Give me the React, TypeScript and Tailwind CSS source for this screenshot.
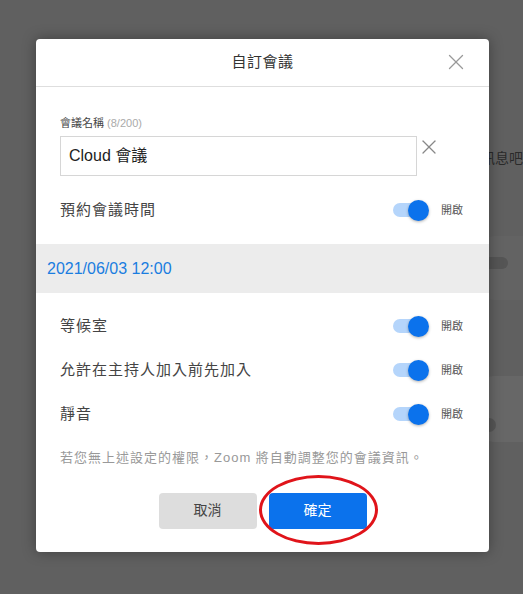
import { X } from "lucide-react";

const font = { fontFamily: '"Liberation Sans", "Noto Sans CJK TC", sans-serif' };

const Toggle = () => (
  <div className="flex items-center gap-3">
    <div className="relative w-[36px] h-[21px] flex items-center">
      <div className="w-[32px] h-[14px] rounded-full bg-[#b5d5fb]" />
      <div className="absolute right-0 top-0 w-[21px] h-[21px] rounded-full bg-[#0b72ec] shadow-[0_1px_3px_rgba(0,0,0,0.3)]" />
    </div>
    <span className="text-[11px] text-[#555]">開啟</span>
  </div>
);

const SettingRow = ({ label }: { label: string }) => (
  <div className="h-[44px] flex items-center justify-between pl-6 pr-[26px]">
    <span className="text-[15px] text-[#444] tracking-[1px]">{label}</span>
    <Toggle />
  </div>
);

export default function App() {
  return (
    <div style={font} className="relative w-[523px] h-[594px] bg-[#606060] overflow-hidden">
      {/* page behind the overlay */}
      <div className="absolute left-[481px] top-[148px] text-[14px] text-[#2a2a2a] whitespace-nowrap">訊息吧</div>
      <div className="absolute left-[480px] top-[236px] w-[80px] h-[64px] rounded-[14px] bg-[#636363]" />
      <div className="absolute left-[470px] top-[257px] w-[38px] h-[12px] rounded-full bg-[#555]" />
      <div className="absolute left-[480px] top-[376px] w-[80px] h-[66px] rounded-[14px] bg-[#676767]" />
      <div className="absolute left-[470px] top-[418px] w-[26px] h-[14px] rounded-full bg-[#575757]" />

      <div className="absolute left-[36px] top-[39px] w-[453px] h-[513px] bg-white rounded-[4px] shadow-[0_0_14px_rgba(0,0,0,0.35)] flex flex-col">
        <div className="h-[48px] flex items-center justify-center relative border-b border-[#dedede]">
          <span className="text-[15px] text-[#333] tracking-[0.5px]">自訂會議</span>
          <X className="absolute right-[20px] top-[10px] w-[26px] h-[26px] text-[#999]" strokeWidth={1.2} />
        </div>

        <div className="pl-6 pt-[29px]">
          <div className="text-[11px] text-[#444] leading-[14px]">
            會議名稱 <span className="text-[#aaa]">(8/200)</span>
          </div>
          <div className="mt-[6px] flex items-start">
            <div className="w-[357px] h-[40px] border border-[#d6d6d6] flex items-center pl-[8px] text-[16px] text-[#222]">
              Cloud 會議
            </div>
            <X className="ml-[0px] mt-[-1px] w-[24px] h-[24px] text-[#888]" strokeWidth={1.3} />
          </div>
        </div>

        <div className="mt-[12px]">
          <SettingRow label="預約會議時間" />
        </div>

        <div className="mt-[12px] h-[49px] bg-[#ececec] flex items-center pl-[11px] text-[16px] text-[#1a7de0]">
          2021/06/03 12:00
        </div>

        <div className="mt-[11px]">
          <SettingRow label="等候室" />
          <SettingRow label="允許在主持人加入前先加入" />
          <SettingRow label="靜音" />
        </div>

        <div className="pl-6 mt-[12px] text-[13px] text-[#999] tracking-[1px]">
          若您無上述設定的權限，Zoom 將自動調整您的會議資訊。
        </div>

        <div className="mt-[25px] flex justify-center gap-3">
          <button className="w-[98px] h-[36px] rounded-[4px] bg-[#dddddd] text-[14px] text-[#444]">取消</button>
          <div className="relative">
            <button className="w-[98px] h-[36px] rounded-[4px] bg-[#0b72ec] text-[14px] text-white">確定</button>
            <div className="absolute left-[-10px] top-[-18px] w-[119px] h-[70px] rounded-[50%] border-[3px] border-[#e0141a]" />
          </div>
        </div>
      </div>
    </div>
  );
}
